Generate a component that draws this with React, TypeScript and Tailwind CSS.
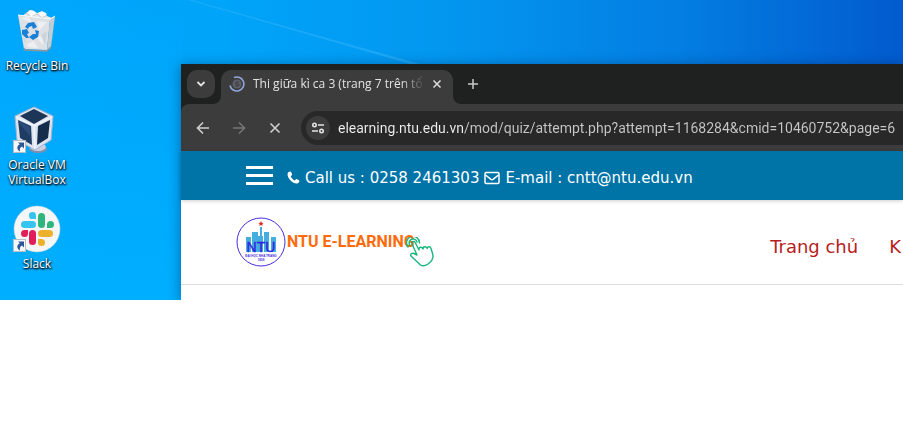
import type { ReactNode } from "react";

function ShortcutArrow() {
  return (
    <g>
      <rect x="0.5" y="34.5" width="12" height="12" fill="#f4f6f8" stroke="#b9bec4" />
      <path d="M5 36.500h6v6l-2-2c-2 1-2.500 2.500-2 5-3.500-2-3.500-5.500-.2-7.200z" fill="#2b5797" />
    </g>
  );
}

function RecycleBinIcon() {
  return (
    <svg viewBox="0 0 48 48" className="size-12" aria-hidden="true">
      <path d="M8 10 13 6l4-3 4 1 3 2 5-2 4 2 1 3 5 2-3 4H11z" fill="#e6e9ec" />
      <path d="m17 3 4 1 3 4-5 2-4-4zM27 5l6 1-1 4-6-1z" fill="#fbfbfb" />
      <path d="m13 6 5 4 6-3 5 4 5-3" stroke="#c3c8cd" fill="none" />
      <path d="m5 8 32 4-3 31-23-1z" fill="#dde1e6" />
      <path d="m37 12 5-3-4 31-4 3z" fill="#c3cbd3" />
      <path d="m5 8 32 4 5-3" stroke="#f7f9fa" fill="none" />
      <path d="m11 41 1 2 22 1 4-4" stroke="#8f979e" strokeWidth="1.500" fill="none" />
      <path d="m7 11 9-1 3 6zM24 14l10 1-8 9zM24 31l8-6-2 13zM14 37l7-3 4 7-10-1z" fill="#f1f3f5" opacity=".8" />
      <path d="m28 28 6-4-2 14zM9 26l4 10-2-2z" fill="#cdd3da" />
      <g fill="#1b7fd6">
        <path d="m12 20 3-4 6-1 3 5-4 2-1-3-3 1-1 2z" />
        <path d="m9 23 5-1 2 4-2 1 2 4-3 0-4-4z" />
        <path d="m22 23 4 1-1 6-5 3-4-3 4-3 3 0z" />
      </g>
    </svg>
  );
}

function VirtualBoxIcon() {
  return (
    <svg viewBox="0 0 48 48" className="size-12" aria-hidden="true">
      <ellipse cx="25" cy="43" rx="9" ry="4" fill="#7f90ae" />
      <ellipse cx="25" cy="41" rx="8" ry="4" fill="#c7d1e1" />
      <path d="m21 1 19 9-2 24-16 10L4 34 2 10z" fill="#dce4f0" stroke="#a5b4cd" />
      <path d="m21 3 14 7-14 8L7 10z" fill="#1d3556" />
      <path d="m5 14 13 6 1 19L7 32z" fill="#1f3c63" />
      <path d="m37 14-12 6-1 19 11-7z" fill="#162c4b" />
      <path d="m7 18 10 12v-9L6 15z" fill="#35578a" opacity=".6" />
      <path d="m3 11 18 9 18-9M21 20l1 23" fill="none" stroke="#f1f5fb" strokeWidth="1.500" />
      <ShortcutArrow />
    </svg>
  );
}

function SlackIcon() {
  return (
    <svg viewBox="0 0 48 48" className="size-12" aria-hidden="true">
      <circle cx="24" cy="24" r="23" fill="#f6f6f6" stroke="#cbd9df" strokeWidth=".5" />
      <g fill="#36c5f0">
        <rect x="8" y="16" width="15" height="7" rx="3.500" />
        <path d="M23 14h-3a3.500 3.500 0 1 1 3-3.500z" />
      </g>
      <g fill="#2eb67d">
        <rect x="25" y="8" width="7" height="15" rx="3.500" />
        <path d="M34 23v-3.500a3.500 3.500 0 1 1 3.500 3.500z" />
      </g>
      <g fill="#ecb22e">
        <rect x="25" y="25" width="15" height="7" rx="3.500" />
        <path d="M25 34h3.500a3.500 3.500 0 1 1-3.500 3.500z" />
      </g>
      <g fill="#e01e5a">
        <rect x="16" y="25" width="7" height="15" rx="3.500" />
        <path d="M15 25v3.500a3.500 3.500 0 1 1-3.500-3.500z" />
      </g>
      <ShortcutArrow />
    </svg>
  );
}

function Shortcut({ icon, label }: { icon: ReactNode; label: string }) {
  return (
    <button
      type="button"
      className="flex w-[74px] flex-col items-center gap-[3px] text-center font-['Open_Sans','Noto_Sans',sans-serif] text-[12px] leading-[15px] text-white [text-shadow:1px_1px_2px_#000,0_1px_2px_#000]"
    >
      {icon}
      {label}
    </button>
  );
}

function Wallpaper() {
  return (
    <svg className="absolute inset-0 size-full" viewBox="0 0 903 300" preserveAspectRatio="none" aria-hidden="true">
      <defs>
        <linearGradient id="sky" x1="0" y1="0" x2="1" y2="0">
          <stop offset="0" stopColor="#00a7fc" />
          <stop offset=".25" stopColor="#00a4f9" />
          <stop offset=".5" stopColor="#0396ef" />
          <stop offset=".75" stopColor="#037ee2" />
          <stop offset="1" stopColor="#025bce" />
        </linearGradient>
        <linearGradient id="glow" x1="0" y1="0" x2="0" y2="1">
          <stop offset="0" stopColor="#00aeff" stopOpacity="0" />
          <stop offset="1" stopColor="#00aeff" />
        </linearGradient>
      </defs>
      <rect width="903" height="300" fill="url(#sky)" />
      <rect width="182" height="300" fill="url(#glow)" />
      <path d="m192 0 228 64h-10L188 0z" fill="#40b8ff" opacity=".4" />
    </svg>
  );
}

function TabStrip() {
  return (
    <div className="flex h-10 bg-[#1f2120] pl-[6px] pt-[6px]">
      <button
        type="button"
        aria-label="Search tabs"
        className="grid size-7 place-items-center rounded-[10px] bg-[#3c3c3c] text-[#e3e3e3]"
      >
        <svg viewBox="0 0 10 10" className="size-[10px]" fill="none" stroke="currentColor" strokeWidth="1.800">
          <path d="m1.500 3 3.500 3.500L8.500 3" />
        </svg>
      </button>
      <svg viewBox="0 0 8 8" className="ml-[-2px] size-2 self-end fill-[#3c3c3c]" aria-hidden="true">
        <path d="M8 0v8H0a8 8 0 0 0 8-8z" />
      </svg>
      <div className="flex w-[232px] shrink-0 items-center rounded-t-[10px] bg-[#3c3c3c] pb-[6px] pl-2 pr-2">
        <svg viewBox="0 0 16 16" className="size-4 shrink-0" fill="none" aria-hidden="true">
          <circle cx="8" cy="8" r="4.500" fill="#5d6068" />
          <path d="M10 6H7.500a1 1 0 0 0 0 2H9a1 1 0 0 1 0 2H6" stroke="#363839" />
          <path d="M5 1.600A7 7 0 1 1 1 9.500" stroke="#8fa9df" strokeWidth="1.600" />
        </svg>
        <span className="ml-2 min-w-0 flex-1 overflow-hidden whitespace-nowrap font-['Open_Sans','Noto_Sans',sans-serif] text-[12px] leading-5 text-[#e3e3e3] [mask-image:linear-gradient(to_right,#000_86%,transparent)]">
          Thi giữa kì ca 3 (trang 7 trên tổ
        </span>
        <button type="button" aria-label="Close tab" className="ml-1 grid size-4 place-items-center text-[#dedede]">
          <svg viewBox="0 0 10 10" className="size-[10px]" stroke="currentColor" strokeWidth="1.500">
            <path d="m1.500 1.500 7 7m0-7-7 7" />
          </svg>
        </button>
      </div>
      <svg viewBox="0 0 8 8" className="size-2 self-end fill-[#3c3c3c]" aria-hidden="true">
        <path d="M0 0v8h8a8 8 0 0 1-8-8z" />
      </svg>
      <button type="button" aria-label="New tab" className="grid h-7 w-6 place-items-center text-[#c7c7c7]">
        <svg viewBox="0 0 12 12" className="size-3" stroke="currentColor" strokeWidth="1.500">
          <path d="M6 1v10M1 6h10" />
        </svg>
      </button>
    </div>
  );
}

function ToolButton({ label, path, dim }: { label: string; path: string; dim?: boolean }) {
  return (
    <button
      type="button"
      aria-label={label}
      className={`grid w-9 shrink-0 place-items-center ${dim ? "text-[#757575]" : "text-[#cfcfcf]"}`}
    >
      <svg viewBox="0 0 14 14" className="size-[14px]" fill="none" stroke="currentColor" strokeWidth="1.600">
        <path d={path} />
      </svg>
    </button>
  );
}

function Toolbar() {
  return (
    <div className="bg-[#1f2120]">
      <div className="flex h-[47px] items-center rounded-tl-lg bg-[#3c3c3c] pl-1">
        <ToolButton label="Back" path="M13 7H1.500M7 1.500 1.500 7 7 12.500" />
        <ToolButton label="Forward" path="M1 7h11.500M7 1.500 12.500 7 7 12.500" dim />
        <ToolButton label="Stop loading" path="m2.500 2.500 9 9m0-9-9 9" />
        <div className="ml-2 flex h-[34px] min-w-0 flex-1 items-center rounded-l-full bg-[#282828] pl-[5px]">
          <button
            type="button"
            aria-label="View site information"
            className="grid size-6 shrink-0 place-items-center rounded-full bg-[#3c3c3c] text-[#e3e3e3]"
          >
            <svg viewBox="0 0 14 12" className="h-3 w-[14px]" fill="none" stroke="currentColor" strokeWidth="1.600">
              <circle cx="3.500" cy="3" r="1.700" />
              <circle cx="10.500" cy="9" r="1.700" />
              <path d="M7 3h6M1 9h6" />
            </svg>
          </button>
          <input
            type="text"
            aria-label="Address"
            defaultValue="elearning.ntu.edu.vn/mod/quiz/attempt.php?attempt=1168284&cmid=10460752&page=6"
            className="ml-2 min-w-0 flex-1 bg-[linear-gradient(to_right,#f0f0f0_126px,#c7c7c7_126px)] bg-clip-text font-['Roboto','Noto_Sans',sans-serif] text-[14px] leading-5 text-transparent caret-white outline-none"
          />
        </div>
      </div>
    </div>
  );
}

function NtuLogo() {
  return (
    <svg viewBox="0 0 50 50" className="size-[50px]" aria-hidden="true">
      <circle cx="25" cy="25" r="24" fill="#fff" stroke="#4a2be0" />
      <path d="m25 4 .8 1.700 1.800.2-1.300 1.200.3 1.900-1.600-.9-1.600.9.300-1.900-1.300-1.200 1.800-.2z" fill="#e12626" />
      <path d="M10 20h5v15h-5zM16 15h6v20h-6zM24 10h2v25h-2zM28 15h5v20h-5zM35 20h5v15h-5z" fill="#46aede" />
      <path d="M22 19h2v16h-2zM26 19h1v16h-1z" fill="#46aede" />
      <text x="25" y="35" textAnchor="middle" fontFamily="Liberation Sans, sans-serif" fontSize="14" stroke="#3322e0" strokeWidth=".4" fill="#3322e0">
        NTU
      </text>
      <text x="25" y="40" textAnchor="middle" fontFamily="Liberation Sans, sans-serif" fontSize="3" fontWeight="700" fill="#4a2be0">
        ĐẠI HỌC NHA TRANG
      </text>
      <text x="25" y="44" textAnchor="middle" fontFamily="Liberation Sans, sans-serif" fontSize="3" fontWeight="700" fill="#4a2be0">
        1959
      </text>
    </svg>
  );
}

function TapHand() {
  return (
    <svg
      viewBox="0 0 28 30"
      className="ml-[-9px] mt-5 h-[30px] w-7 shrink-0"
      fill="none"
      stroke="#18b67c"
      strokeWidth="1.400"
      strokeLinecap="round"
      strokeLinejoin="round"
      aria-hidden="true"
    >
      <path d="M2 10a6.500 6.500 0 1 1 11.500-4M4 8.500A4 4 0 1 1 11 5" />
      <path d="M14.500 28 5 19c-1-1.500 1-3.500 3-2.500l3 1.500L6 7c-.7-2.500 2-3.500 3.200-1.500l3.800 7.500c-.5-3 2.500-4 4-1 0-3 3-3 4.300-.5 0-2.500 3-2 3.700 0l1.800 6c1 4-1.300 7-4.800 9.500-2.500 1.700-5 2.500-7.500 1z" />
    </svg>
  );
}

function SitePage() {
  return (
    <div className="font-['DejaVu_Sans',sans-serif]">
      <header className="relative flex h-[49px] items-center bg-[#0073a7] pl-[65px] text-white shadow-[0_1px_4px_rgba(0,0,0,0.2)]">
        <button type="button" aria-label="Menu" className="flex w-[27px] flex-col gap-[5px]">
          <span className="h-[3px] bg-white" />
          <span className="h-[3px] bg-white" />
          <span className="h-[3px] bg-white" />
        </button>
        <p className="ml-[14px] mt-1 flex items-center gap-[5px] whitespace-nowrap text-[15px] leading-5">
          <svg viewBox="0 0 13 13" className="size-[13px]" fill="currentColor" aria-hidden="true">
            <path d="M3.500.6C2.600.3.900 1.300.600 2.500c-.5 2.400 1.200 5.200 3 7 2 2 4.400 3.200 6.500 2.900 1.200-.2 2.400-1.500 2.300-2.500-.1-.6-2.600-1.900-3-1.800-.6.100-1.100 1.300-1.600 1.300-.9 0-3.900-2.900-4-3.900 0-.6 1.300-1.100 1.400-1.700C5.200 3.300 4.100.8 3.500.6z" />
          </svg>
          Call us : 0258 2461303
          <svg viewBox="0 0 16 14" className="h-[14px] w-4" fill="none" stroke="currentColor" strokeWidth="1.500" aria-hidden="true">
            <rect x="1" y="1.500" width="14" height="11" rx="1.200" />
            <path d="m1.500 4 5.200 4.200a2 2 0 0 0 2.600 0L14.500 4" />
          </svg>
          E-mail : cntt@ntu.edu.vn
        </p>
      </header>
      <div className="flex h-[85px] items-center border-b border-[#dedede] bg-white pl-[55px]">
        <a href="#home" className="flex items-center">
          <NtuLogo />
          <span className="ml-px whitespace-nowrap font-['Roboto','Liberation_Sans',sans-serif] text-[16px] font-bold leading-5 text-[#ff6b0a]">
            NTU E-LEARNING
          </span>
          <TapHand />
        </a>
        <nav className="ml-auto mt-[10px] flex gap-[31px] pr-[2px] text-[18px] leading-6 text-[#b71c1c]">
          <a href="#home">Trang chủ</a>
          <a href="#faculties">K</a>
        </nav>
      </div>
    </div>
  );
}

export default function App() {
  return (
    <div className="min-h-screen bg-white">
      <main className="relative flex h-[300px] overflow-hidden">
        <Wallpaper />
        <div className="relative flex w-[181px] shrink-0 flex-col items-start gap-[18px] pt-[7px]">
          <div className="h-[81px]">
            <Shortcut icon={<RecycleBinIcon />} label="Recycle Bin" />
          </div>
          <Shortcut icon={<VirtualBoxIcon />} label="Oracle VM VirtualBox" />
          <Shortcut icon={<SlackIcon />} label="Slack" />
        </div>
        <section
          aria-label="Browser"
          className="relative mt-16 min-w-0 flex-1 bg-white shadow-[0_2px_12px_rgba(0,20,60,0.45)]"
        >
          <TabStrip />
          <Toolbar />
          <SitePage />
        </section>
      </main>
    </div>
  );
}
